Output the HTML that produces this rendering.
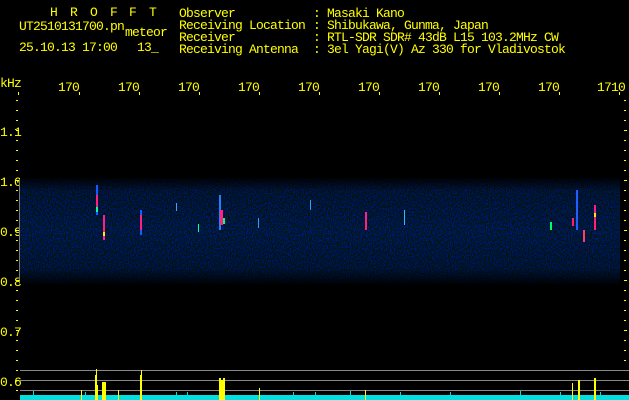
<!DOCTYPE html>
<html><head><meta charset="utf-8"><style>
html,body{margin:0;padding:0;background:#000;width:629px;height:400px;overflow:hidden}
svg{display:block}
text{font-family:"Liberation Mono",monospace;font-size:13px;letter-spacing:-0.8px;fill:#ffff00}
</style></head><body>
<svg width="629" height="400" xmlns="http://www.w3.org/2000/svg">
<defs>
<filter id="nz" x="0" y="0" width="100%" height="100%">
<feTurbulence type="fractalNoise" baseFrequency="0.95 0.6" numOctaves="2" seed="4" result="t"/>
<feColorMatrix type="matrix" values="0 0 0 0 0  0 0 0 0 0.02  0 0 0 3 -1.35  0 0 0 0 1" in="t"/>
</filter>
<linearGradient id="fade" x1="0" y1="0" x2="0" y2="1">
<stop offset="0" stop-color="#000" stop-opacity="0.9"/>
<stop offset="0.12" stop-color="#000" stop-opacity="0.2"/>
<stop offset="0.5" stop-color="#000" stop-opacity="0"/>
<stop offset="0.85" stop-color="#000" stop-opacity="0.2"/>
<stop offset="1" stop-color="#000" stop-opacity="0.9"/>
</linearGradient>
</defs>
<rect width="629" height="400" fill="#000"/>
<g style="fill:#00e000;font-size:14px">
<text x="50" y="16">H</text><text x="70" y="16">R</text><text x="90" y="16">O</text><text x="110" y="16">F</text><text x="129" y="16">F</text><text x="149" y="16">T</text>
</g>
<text x="19" y="30">UT2510131700.pn</text>
<text x="125" y="36">meteor</text>
<text x="19" y="51">25.10.13 17:00</text>
<text x="137" y="51">13_</text>
<g>
<text x="179" y="17">Observer</text>
<text x="179" y="29">Receiving Location</text>
<text x="179" y="41">Receiver</text>
<text x="179" y="53">Receiving Antenna</text>
<text x="313" y="17">: Masaki Kano</text>
<text x="313" y="29">: Shibukawa, Gunma, Japan</text>
<text x="313" y="41">: RTL-SDR SDR# 43dB L15 103.2MHz CW</text>
<text x="313" y="53">: 3el Yagi(V) Az 330 for Vladivostok</text>
</g>
<text x="0" y="87">kHz</text>
<g>
<text x="58" y="91">170</text><text x="118" y="91">170</text><text x="178" y="91">170</text><text x="238" y="91">170</text><text x="298" y="91">170</text>
<text x="358" y="91">170</text><text x="418" y="91">170</text><text x="478" y="91">170</text><text x="538" y="91">170</text><text x="597" y="91">1710</text>
</g>
<g fill="#ffff00">
<rect x="18" y="92" width="1" height="3"/><rect x="79" y="92" width="1" height="3"/><rect x="139" y="92" width="1" height="3"/><rect x="199" y="92" width="1" height="3"/><rect x="259" y="92" width="1" height="3"/><rect x="319" y="92" width="1" height="3"/>
<rect x="379" y="92" width="1" height="3"/><rect x="439" y="92" width="1" height="3"/><rect x="499" y="92" width="1" height="3"/><rect x="559" y="92" width="1" height="3"/><rect x="619" y="92" width="1" height="3"/>
</g>
<g>
<text x="0" y="136">1.1</text><text x="0" y="186">1.0</text><text x="0" y="236">0.9</text><text x="0" y="286">0.8</text><text x="0" y="336">0.7</text><text x="0" y="386">0.6</text>
</g>
<g fill="#ffff00" id="ticks">
<rect x="16" y="100" width="2" height="1"/><rect x="16" y="110" width="2" height="1"/><rect x="16" y="120" width="2" height="1"/><rect x="16" y="130" width="3" height="1"/><rect x="16" y="140" width="2" height="1"/><rect x="16" y="150" width="2" height="1"/><rect x="16" y="160" width="2" height="1"/><rect x="16" y="170" width="2" height="1"/><rect x="16" y="180" width="3" height="1"/>
<rect x="16" y="190" width="2" height="1"/><rect x="16" y="200" width="2" height="1"/><rect x="16" y="210" width="2" height="1"/><rect x="16" y="220" width="2" height="1"/><rect x="16" y="230" width="3" height="1"/><rect x="16" y="240" width="2" height="1"/><rect x="16" y="250" width="2" height="1"/><rect x="16" y="260" width="2" height="1"/><rect x="16" y="270" width="2" height="1"/><rect x="16" y="280" width="3" height="1"/>
<rect x="16" y="290" width="2" height="1"/><rect x="16" y="300" width="2" height="1"/><rect x="16" y="310" width="2" height="1"/><rect x="16" y="320" width="2" height="1"/><rect x="16" y="330" width="3" height="1"/><rect x="16" y="340" width="2" height="1"/><rect x="16" y="350" width="2" height="1"/><rect x="16" y="360" width="2" height="1"/><rect x="16" y="370" width="2" height="1"/><rect x="16" y="380" width="3" height="1"/><rect x="16" y="390" width="2" height="1"/>
</g>
<use href="#ticks" x="608"/>
<rect x="20" y="178" width="600" height="106" fill="#02020f"/>
<rect x="20" y="178" width="600" height="106" filter="url(#nz)" opacity="0.6"/>
<rect x="20" y="178" width="600" height="106" fill="url(#fade)"/>
<rect x="19" y="180" width="1" height="100" fill="#777"/>
<g>
<rect x="96" y="185" width="2" height="30" fill="#1060ff"/><rect x="96" y="195" width="2" height="12" fill="#ff2080"/><rect x="96" y="207" width="2" height="5" fill="#00ffaa"/>
<rect x="103" y="215" width="2" height="25" fill="#ff2080"/><rect x="103" y="232" width="2" height="4" fill="#ffee00"/>
<rect x="140" y="210" width="2" height="25" fill="#1060ff"/><rect x="140" y="215" width="2" height="15" fill="#ff2080"/>
<rect x="219" y="195" width="2" height="35" fill="#2080ff"/><rect x="220" y="210" width="3" height="15" fill="#ff2080"/><rect x="223" y="218" width="2" height="6" fill="#00ff80"/>
<rect x="365" y="212" width="2" height="18" fill="#ff2080"/>
<rect x="404" y="210" width="1" height="15" fill="#20c0ff"/>
<rect x="550" y="222" width="2" height="8" fill="#00ff60"/>
<rect x="572" y="218" width="2" height="8" fill="#ff2060"/>
<rect x="576" y="190" width="2" height="40" fill="#2060ff"/>
<rect x="583" y="230" width="2" height="12" fill="#ff4060"/>
<rect x="594" y="205" width="2" height="25" fill="#ff2080"/><rect x="594" y="213" width="2" height="4" fill="#ffee00"/>
<rect x="176" y="203" width="1" height="8" fill="#40a0ff"/><rect x="198" y="224" width="1" height="8" fill="#00ffa0"/><rect x="258" y="218" width="1" height="10" fill="#20a0ff"/><rect x="310" y="200" width="1" height="10" fill="#20a0ff"/>
</g>
<rect x="20" y="370" width="609" height="1" fill="#888"/>
<rect x="20" y="380" width="609" height="1" fill="#888"/>
<rect x="20" y="390" width="609" height="1" fill="#888"/>
<rect x="20" y="395" width="609" height="5" fill="#00e0e0"/>
<g fill="#00e0e0">
<rect x="33" y="391" width="1" height="9"/><rect x="85" y="392" width="1" height="8"/><rect x="176" y="392" width="1" height="8"/><rect x="187" y="392" width="1" height="8"/><rect x="293" y="392" width="1" height="8"/><rect x="315" y="392" width="1" height="8"/><rect x="350" y="391" width="1" height="9"/><rect x="400" y="392" width="1" height="8"/><rect x="450" y="392" width="1" height="8"/><rect x="520" y="391" width="1" height="9"/><rect x="560" y="392" width="1" height="8"/><rect x="600" y="392" width="1" height="8"/>
</g>
<g fill="#ffff00">
<rect x="81" y="390" width="1" height="10"/>
<rect x="95" y="375" width="2" height="25"/><rect x="96" y="369" width="1" height="31"/><rect x="97" y="385" width="1" height="15"/>
<rect x="102" y="382" width="4" height="18"/><rect x="104" y="386" width="2" height="14"/>
<rect x="118" y="390" width="1" height="10"/>
<rect x="140" y="375" width="2" height="25"/><rect x="141" y="370" width="1" height="30"/>
<rect x="219" y="378" width="2" height="22"/><rect x="221" y="380" width="2" height="20"/><rect x="223" y="378" width="2" height="22"/>
<rect x="259" y="388" width="1" height="12"/>
<rect x="365" y="390" width="1" height="10"/>
<rect x="572" y="383" width="1" height="17"/><rect x="578" y="380" width="2" height="20"/><rect x="594" y="378" width="2" height="22"/>
</g>
</svg>
</body></html>
